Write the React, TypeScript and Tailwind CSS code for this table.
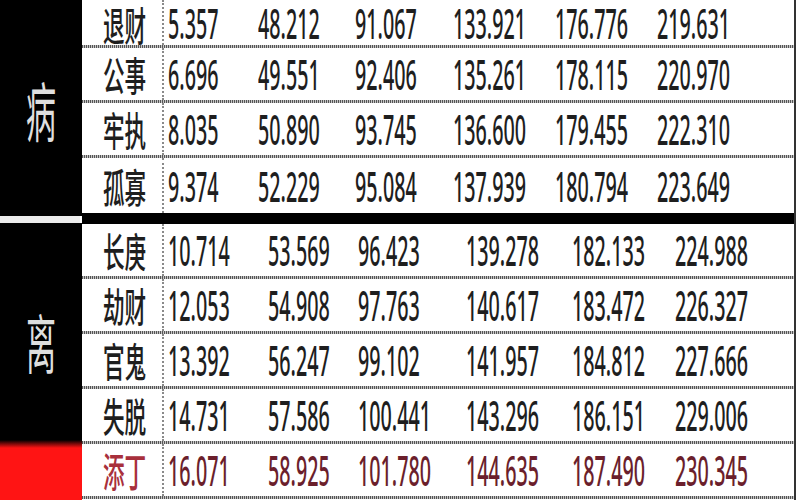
const bingRows = [
  ["退财", "5.357", "48.212", "91.067", "133.921", "176.776", "219.631"],
  ["公事", "6.696", "49.551", "92.406", "135.261", "178.115", "220.970"],
  ["牢执", "8.035", "50.890", "93.745", "136.600", "179.455", "222.310"],
  ["孤寡", "9.374", "52.229", "95.084", "137.939", "180.794", "223.649"],
];

const liRows = [
  ["长庚", "10.714", "53.569", "96.423", "139.278", "182.133", "224.988"],
  ["劫财", "12.053", "54.908", "97.763", "140.617", "183.472", "226.327"],
  ["官鬼", "13.392", "56.247", "99.102", "141.957", "184.812", "227.666"],
  ["失脱", "14.731", "57.586", "100.441", "143.296", "186.151", "229.006"],
  ["添丁", "16.071", "58.925", "101.780", "144.635", "187.490", "230.345"],
];

const Separator = () => (
  <div className="h-[3px] shrink-0 bg-[repeating-linear-gradient(90deg,#555_0_1px,#c4c4c4_1px_2px)]" />
);

type RowProps = {
  cells: string[];
  cols: string;
  red?: boolean;
  last?: boolean;
  first?: boolean;
};

const Row = ({ cells, cols, red, last, first }: RowProps) => {
  const [name, ...nums] = cells;
  return (
    <div className={`flex flex-col ${first ? "h-[48px]" : "h-[55px]"}`}>
      <div className={`grid flex-1 ${cols}`}>
        <div
          className={`flex items-center border-r-2 border-dotted border-[#8a8a8a] pl-[21px] ${
            first ? "pt-[2px]" : ""
          }`}
        >
          <span
            className={`inline-block origin-left scale-x-[0.54] whitespace-nowrap font-['Noto_Sans_CJK_SC',sans-serif] text-[40px] font-medium leading-none ${
              red ? "text-[#a8303c]" : "text-[#1e1e1e]"
            }`}
          >
            {name}
          </span>
        </div>
        {nums.map((n, i) => (
          <div key={i} className={`flex items-center pl-1 ${first ? "pt-[1px]" : ""}`}>
            <span
              className={`inline-block origin-left scale-x-[0.47] whitespace-nowrap font-['Noto_Sans',sans-serif] text-[42px] font-medium leading-none ${
                red ? "text-[#6b1f2c]" : "text-[#1e1e1e]"
              }`}
            >
              {n}
            </span>
          </div>
        ))}
      </div>
      {!last && <Separator />}
    </div>
  );
};

export default function App() {
  const topCols = "grid-cols-[82px_90px_97px_98px_102px_102px_1fr]";
  const bottomCols = "grid-cols-[82px_100px_90px_108px_106px_103px_1fr]";

  return (
    <div className="flex h-[500px] w-[800px] overflow-hidden bg-white">
      {/* 左侧分组标签 */}
      <div className="flex h-full w-[82px] shrink-0 flex-col">
        <div className="flex h-[216px] items-center justify-center bg-black">
          <span className="inline-block scale-x-[0.47] font-['Noto_Sans_CJK_SC',sans-serif] text-[64px] leading-none text-[#dedede]">
            病
          </span>
        </div>
        <div className="mr-[2px] h-[7px] bg-[#ececec]" />
        <div className="flex flex-1 items-center justify-center bg-black pt-[17px]">
          <span className="inline-block scale-x-[0.47] font-['Noto_Sans_CJK_SC',sans-serif] text-[64px] leading-none text-[#dedede]">
            离
          </span>
        </div>
        <div className="h-[60px] bg-[linear-gradient(#000,#ff1414_8px)]" />
      </div>

      {/* 表格 */}
      <div className="flex w-[714px] shrink-0 flex-col border-r-2 border-[#333]">
        <div>
          {bingRows.map((r, i) => (
            <Row
              key={r[0]}
              cells={r}
              cols={topCols}
              first={i === 0}
              last={i === bingRows.length - 1}
            />
          ))}
        </div>
        <div className="h-[11px] shrink-0 bg-black" />
        <div>
          {liRows.map((r, i) => (
            <Row key={r[0]} cells={r} cols={bottomCols} red={i === liRows.length - 1} />
          ))}
        </div>
      </div>
    </div>
  );
}
